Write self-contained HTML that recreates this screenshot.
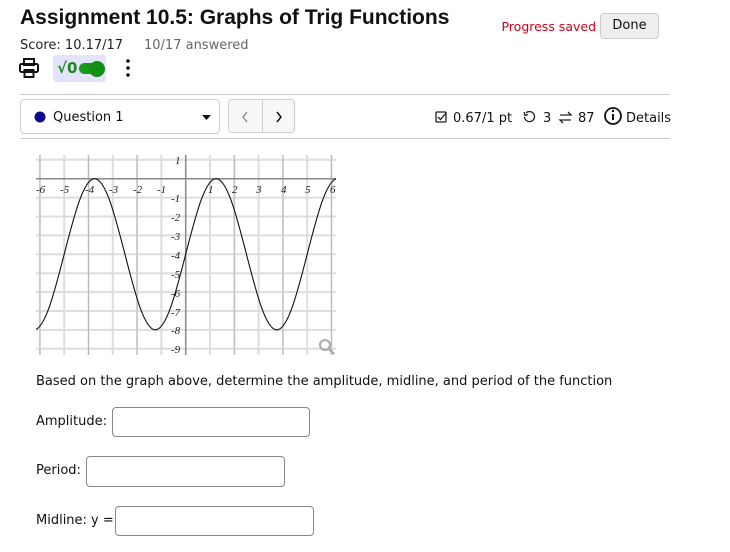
<!DOCTYPE html>
<html><head><meta charset="utf-8"><style>
body{margin:0;width:730px;height:552px;background:#fff;font-family:"DejaVu Sans","Liberation Sans",sans-serif;color:#222;position:relative;overflow:hidden}
.a{position:absolute;white-space:nowrap}
.t{font-size:13px;color:#111}
.inp{position:absolute;border:1px solid #888;border-radius:4px;background:#fff}
.gl text{font-family:"Liberation Serif",serif;font-style:italic;font-size:11px;fill:#222}
</style></head><body>
<div class="a" style="left:20px;top:6px;font-size:21px;font-weight:bold;color:#111;font-family:'Liberation Sans',sans-serif">Assignment 10.5: Graphs of Trig Functions</div>
<div class="a" style="left:20px;top:38px;font-size:13px">Score: 10.17/17<span style="color:#666;position:absolute;left:124px">10/17 answered</span></div>
<div class="a" style="right:134px;top:19px;font-size:12.5px;color:#d0021b">Progress saved</div>
<div class="a" style="left:600px;top:13px;width:57px;height:24px;border:1px solid #ccc;border-radius:4px;background:#eee;font-size:13px;text-align:center;line-height:24px;color:#111">Done</div>
<div class="a" style="left:53px;top:55px;width:53px;height:27px;background:#e3e3f9;border-radius:3px"></div>
<div class="a" style="left:57px;top:59px;font-size:15px;font-weight:bold;color:#1a8a1a">√0</div>
<div class="a" style="left:79px;top:63px;width:20px;height:11px;background:#1a9a1a;border-radius:6px"></div>
<div class="a" style="left:89px;top:61px;width:16px;height:16px;background:#139013;border-radius:50%"></div>
<svg style="position:absolute;left:0;top:0" width="730" height="552">
<g fill="none" stroke="#111" stroke-width="2"><rect x="24" y="59" width="10" height="6"/><rect x="20" y="64" width="18" height="8" rx="1.5"/><rect x="24.5" y="70" width="9" height="7"/></g>
<circle cx="128" cy="61" r="1.8" fill="#111"/><circle cx="128" cy="68" r="1.8" fill="#111"/><circle cx="128" cy="75" r="1.8" fill="#111"/>
<line x1="20" y1="94.5" x2="670" y2="94.5" stroke="#ccc"/><line x1="20" y1="138.5" x2="670" y2="138.5" stroke="#ccc"/>
<rect x="20.5" y="99.5" width="199" height="34" rx="4" fill="#fff" stroke="#ccc"/>
<circle cx="40" cy="117" r="5.5" fill="#0a0a8a"/>
<path d="M202 115h9l-4.5 5z" fill="#111"/>
<rect x="228.5" y="99.5" width="66" height="33" rx="4" fill="#f7f7f7" stroke="#ccc"/><line x1="262.5" y1="100" x2="262.5" y2="132" stroke="#ccc"/>
<path d="M247 112l-4 5 4 5" fill="none" stroke="#888" stroke-width="1.3"/><path d="M277 112l4 5-4 5" fill="none" stroke="#111" stroke-width="1.5"/>
<g fill="none" stroke="#222" stroke-width="1.3"><rect x="436" y="112" width="10" height="10" rx="1"/><path d="M438 117l2.5 2.5 6-7"/>
<path d="M526 113a5 5 0 1 1-1.5 4"/><path d="M524 112l1 3.5 3-1"/>
<path d="M560 115h11l-3-3M571 120h-11l3 3"/></g>
<circle cx="613" cy="116" r="8" fill="none" stroke="#111" stroke-width="1.8"/><rect x="612" y="114" width="2" height="6" fill="#111"/><circle cx="613" cy="111" r="1.2" fill="#111"/>
<g class="gl">
<g stroke="#ddd" stroke-width="2">
<path d="M39.9 155V355M64.2 155V355M88.5 155V355M112.8 155V355M137.1 155V355M161.4 155V355M210 155V355M234.3 155V355M258.6 155V355M282.9 155V355M307.2 155V355M331.5 155V355"/>
<path d="M36 159.8H336M36 197.6H336M36 216.5H336M36 235.4H336M36 254.3H336M36 273.2H336M36 292.1H336M36 311H336M36 329.9H336M36 348.8H336"/>
</g>
<g stroke="#bbb" stroke-width="1"><path d="M39.9 155V355M88.5 155V355M137.1 155V355M234.3 155V355M282.9 155V355M331.5 155V355"/></g>
<g stroke="#888" stroke-width="1.5"><path d="M185.7 155V355M36 178.7H336"/></g>
<svg x="36" y="150" width="300" height="210" viewBox="36 150 300 210" overflow="hidden">
<path transform="translate(185.7 178.7) scale(24.3 -18.9)" vector-effect="non-scaling-stroke" fill="none" stroke="#111" stroke-width="1.1"
d="M-6.25 -8C-5.8 -8 -5.418 -6.1 -5 -4C-4.582 -1.9 -4.2 0 -3.75 0C-3.3 0 -2.918 -1.9 -2.5 -4C-2.082 -6.1 -1.7 -8 -1.25 -8C-0.8 -8 -0.418 -6.1 0 -4C0.418 -1.9 0.8 0 1.25 0C1.7 0 2.082 -1.9 2.5 -4C2.918 -6.1 3.3 -8 3.75 -8C4.2 -8 4.582 -6.1 5 -4C5.418 -1.9 5.8 0 6.25 0"/>
</svg>
<text x="36" y="193">-6</text><text x="60" y="193">-5</text><text x="85" y="193">-4</text><text x="109" y="193">-3</text><text x="133" y="193">-2</text><text x="157" y="193">-1</text>
<text x="208" y="193">1</text><text x="232" y="193">2</text><text x="256" y="193">3</text><text x="281" y="193">4</text><text x="305" y="193">5</text><text x="330" y="193">6</text>
<text x="175" y="164">1</text><text x="171" y="202">-1</text><text x="171" y="221">-2</text><text x="171" y="240">-3</text><text x="171" y="259">-4</text><text x="171" y="278">-5</text><text x="171" y="297">-6</text><text x="171" y="316">-7</text><text x="171" y="334">-8</text><text x="171" y="353">-9</text>
<circle cx="325" cy="345" r="5" fill="none" stroke="#aaa" stroke-width="2"/><path d="M329 349l5 5" stroke="#aaa" stroke-width="2.5"/>
</g>
</svg>
<div class="a t" style="left:453px;top:111px">0.67/1 pt</div>
<div class="a t" style="left:543px;top:111px">3</div>
<div class="a t" style="left:578px;top:111px">87</div>
<div class="a t" style="left:626px;top:111px">Details</div>
<div class="a t" style="left:53px;top:110px">Question 1</div>
<div class="a t" style="left:36px;top:374px">Based on the graph above, determine the amplitude, midline, and period of the function</div>
<div class="a t" style="left:36px;top:414px">Amplitude:</div>
<div class="inp" style="left:112px;top:407px;width:196px;height:28px"></div>
<div class="a t" style="left:36px;top:463px">Period:</div>
<div class="inp" style="left:86px;top:456px;width:197px;height:29px"></div>
<div class="a t" style="left:36px;top:513px">Midline: y =</div>
<div class="inp" style="left:115px;top:506px;width:197px;height:28px"></div>
</body></html>
